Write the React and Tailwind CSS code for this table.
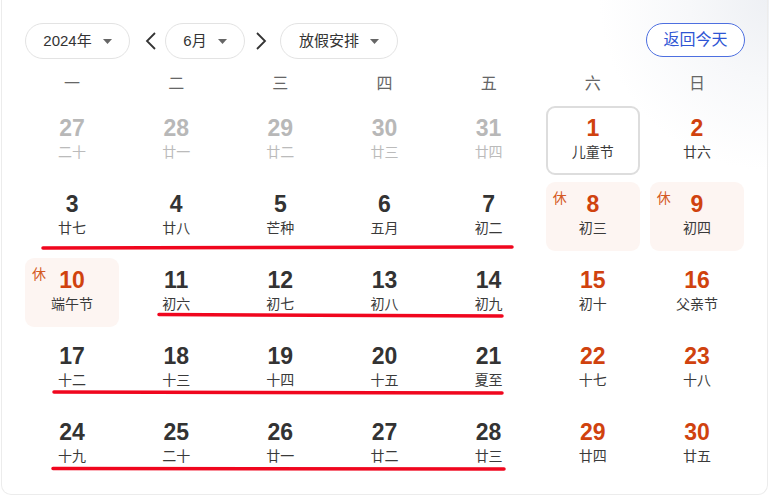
import React from "react";

const WEEK = ["一", "二", "三", "四", "五", "六", "日"];

// d: date, l: lunar/festival, t: type (gray | red | today), rest: 休
const ROWS = [
  [
    { d: 27, l: "二十", t: "gray" },
    { d: 28, l: "廿一", t: "gray" },
    { d: 29, l: "廿二", t: "gray" },
    { d: 30, l: "廿三", t: "gray" },
    { d: 31, l: "廿四", t: "gray" },
    { d: 1, l: "儿童节", t: "today" },
    { d: 2, l: "廿六", t: "red" },
  ],
  [
    { d: 3, l: "廿七" },
    { d: 4, l: "廿八" },
    { d: 5, l: "芒种" },
    { d: 6, l: "五月" },
    { d: 7, l: "初二" },
    { d: 8, l: "初三", t: "red", rest: true },
    { d: 9, l: "初四", t: "red", rest: true },
  ],
  [
    { d: 10, l: "端午节", t: "red", rest: true },
    { d: 11, l: "初六" },
    { d: 12, l: "初七" },
    { d: 13, l: "初八" },
    { d: 14, l: "初九" },
    { d: 15, l: "初十", t: "red" },
    { d: 16, l: "父亲节", t: "red" },
  ],
  [
    { d: 17, l: "十二" },
    { d: 18, l: "十三" },
    { d: 19, l: "十四" },
    { d: 20, l: "十五" },
    { d: 21, l: "夏至" },
    { d: 22, l: "十七", t: "red" },
    { d: 23, l: "十八", t: "red" },
  ],
  [
    { d: 24, l: "十九" },
    { d: 25, l: "二十" },
    { d: 26, l: "廿一" },
    { d: 27, l: "廿二" },
    { d: 28, l: "廿三" },
    { d: 29, l: "廿四", t: "red" },
    { d: 30, l: "廿五", t: "red" },
  ],
];

const Caret = () => (
  <svg width="9" height="5" viewBox="0 0 9 5" className="ml-[11px]">
    <path d="M0 0 L9 0 L4.5 5 Z" fill="#666" />
  </svg>
);

const Chevron = ({ dir }) => (
  <svg width="13" height="20" viewBox="0 0 13 20">
    <path
      d={dir === "left" ? "M11 2 L3 10 L11 18" : "M2 2 L10 10 L2 18"}
      fill="none"
      stroke="#333"
      strokeWidth="1.8"
    />
  </svg>
);

const Select = ({ label, w }) => (
  <button
    className={`flex items-center justify-center h-9 rounded-full border border-[#e3e3e3] bg-white text-[15px] text-[#333] ${w}`}
  >
    {label}
    <Caret />
  </button>
);

const DayCell = ({ day }) => {
  const numColor =
    day.t === "gray" ? "text-[#b8b8b8]" : day.t === "red" || day.t === "today" ? "text-[#d0420e]" : "text-[#333]";
  const lunarColor = day.t === "gray" ? "text-[#bbb]" : "text-[#3a3a3a]";
  let box = "";
  if (day.t === "today") box = "border-2 border-[#ddd] bg-white";
  else if (day.rest) box = "bg-[#fdf5f2]";

  return (
    <div className="h-[76px] px-[5px] pt-[2px]">
      <div className={`relative h-[69px] rounded-[9px] flex flex-col items-center ${box} ${day.t === "today" ? "pt-[7px]" : "pt-[9px]"}`}>
        {day.rest && (
          <span className="absolute left-[7px] top-[7px] text-[14px] leading-[18px] text-[#d45a24]">休</span>
        )}
        <span className={`text-[23px] leading-[26px] font-bold font-['Liberation_Sans',Arial,sans-serif] ${numColor}`}>
          {day.d}
        </span>
        <span className={`mt-[1px] text-[14px] leading-[20px] ${lunarColor}`}>{day.l}</span>
      </div>
    </div>
  );
};

export default function App() {
  return (
    <div className="relative w-[769px] h-[500px] overflow-hidden bg-[radial-gradient(circle_at_100%_0%,#eef0f4_0px,#f7f8fa_80px,#ffffff_170px)] font-['Liberation_Sans','Noto_Sans_CJK_SC',sans-serif]">
      <div className="mx-[1px] h-[495px] border-x border-b border-[#ececec] rounded-b-[10px]">
        {/* top controls */}
        <div className="flex items-start justify-between pt-[23px] pl-[23px] pr-[22px]">
          <div className="flex items-center">
            <Select label="2024年" w="w-[105px]" />
            <div className="w-[35px] pl-[14px] h-9 flex items-center">
              <Chevron dir="left" />
            </div>
            <Select label="6月" w="w-[80px]" />
            <div className="w-[35px] pl-[10px] h-9 flex items-center">
              <Chevron dir="right" />
            </div>
            <Select label="放假安排" w="w-[118px]" />
          </div>
          <button className="h-[34px] w-[99px] rounded-full border border-[#4d6fe0] text-[16px] text-[#2f55d4] bg-white">
            返回今天
          </button>
        </div>

        {/* weekday header */}
        <div className="grid grid-cols-7 mx-[18px] mt-[14px] h-[22px]">
          {WEEK.map((w) => (
            <div key={w} className="text-center text-[16px] leading-[22px] text-[#666]">
              {w}
            </div>
          ))}
        </div>

        {/* days */}
        <div className="mx-[18px] mt-[9px]">
          {ROWS.map((row, i) => (
            <div key={i} className="grid grid-cols-7">
              {row.map((day) => (
                <DayCell key={`${i}-${day.d}`} day={day} />
              ))}
            </div>
          ))}
        </div>
      </div>

      {/* hand-drawn red underlines over the calendar */}
      <svg className="absolute inset-0 pointer-events-none" width="769" height="500">
        <g stroke="#f0061e" strokeWidth="3.5" strokeLinecap="round" fill="none">
          <path d="M43 248 L512 247" />
          <path d="M159 314.5 L502 316" />
          <path d="M54 392 L502 393" />
          <path d="M53 468.5 L504 469" />
        </g>
      </svg>
    </div>
  );
}
